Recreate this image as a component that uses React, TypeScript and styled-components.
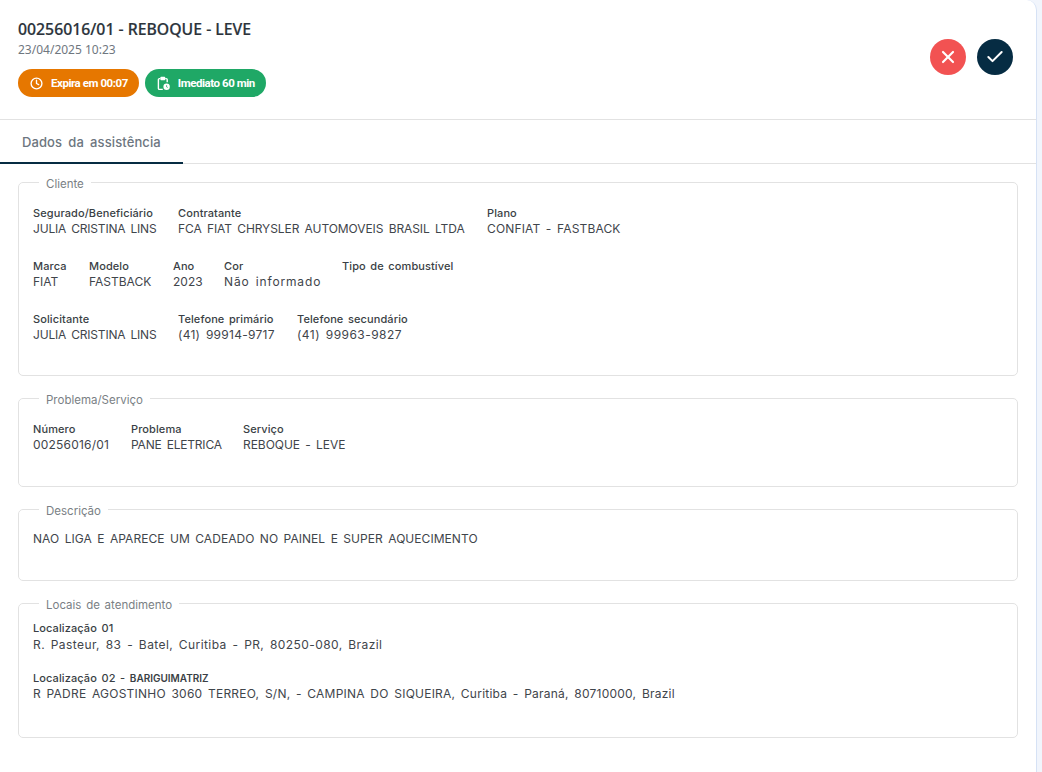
import React from 'react'
import styled, {createGlobalStyle} from 'styled-components'
import {Clock, X, Check} from 'lucide-react'

const GlobalStyle = createGlobalStyle`
    html, body {
        margin: 0;
        padding: 0;
        background-color: #f1f5fc;
    }
    body {
        font-family: "Inter", "Liberation Sans", sans-serif;
        overflow: hidden;
    }
`

const Page = styled.div`
    width: 1037px;
    height: 772px;
    background-color: #fff;
    border-top-right-radius: 10px;
    border-right: 1px solid #d6e2f5;
    box-sizing: border-box;
    display: flex;
    flex-direction: column;
`

const Header = styled.header`
    height: 120px;
    box-sizing: border-box;
    border-bottom: 1px solid #e2e2e2;
    padding: 19px 23px 0 18px;
    display: flex;
    justify-content: space-between;
`

const Title = styled.h1`
    margin: 0;
    font-family: "Noto Sans", sans-serif;
    font-size: 15.8px;
    line-height: 21px;
    font-weight: 500;
    -webkit-text-stroke: 0.2px #2b333b;
    color: #2b333b;
`

const DateText = styled.div`
    font-family: "Noto Sans", sans-serif;
    font-size: 12px;
    line-height: 16px;
    margin-top: 2px;
    color: #6f7780;
`

const Badges = styled.div`
    display: flex;
    gap: 6px;
    margin-top: 11px;
`

const Badge = styled.span<{$bg: string}>`
    height: 28px;
    padding: 0 11px 0 12px;
    border-radius: 14px;
    background-color: ${({$bg}) => $bg};
    color: #fff;
    font-family: "Roboto", sans-serif;
    font-size: 11.5px;
    font-weight: 700;
    letter-spacing: -0.45px;
    display: flex;
    align-items: center;
    gap: 8px;
`

const Actions = styled.div`
    display: flex;
    gap: 11px;
    margin-top: 20px;
`

const RoundButton = styled.button<{$bg: string}>`
    width: 36px;
    height: 36px;
    border-radius: 50%;
    border: none;
    padding: 0;
    background-color: ${({$bg}) => $bg};
    color: #fff;
    display: flex;
    align-items: center;
    justify-content: center;
`

const Tabs = styled.nav`
    height: 44px;
    box-sizing: border-box;
    border-bottom: 1px solid #e2e2e2;
    display: flex;
`

const Tab = styled.div`
    width: 183px;
    height: 44px;
    box-sizing: border-box;
    padding: 12px 0 0 22px;
    border-bottom: 2px solid #062c43;
    font-size: 13px;
    line-height: 20px;
    font-weight: 500;
    letter-spacing: 0.1px;
    word-spacing: 2.6px;
    color: #6d7680;
`

const Content = styled.main`
    padding: 9px 18px 0;
    display: flex;
    flex-direction: column;
    gap: 13px;
`

const Box = styled.fieldset<{$height: number; $top?: number}>`
    margin: 0;
    height: ${({$height}) => $height}px;
    box-sizing: border-box;
    border: 1px solid #e2e2e2;
    border-radius: 5px;
    padding: ${({$top}) => $top ?? 14}px 14px 0;
    min-width: 0;
`

const Legend = styled.legend`
    margin-left: 6px;
    padding: 3px 7px 0;
    font-size: 11.5px;
    line-height: 16px;
    word-spacing: 1.5px;
    color: #7a7f85;
`

const Row = styled.div`
    display: flex;
    gap: 21px;
    margin-bottom: 23px;
`

const Field = styled.div<{$width?: number}>`
    ${({$width}) => $width ? `width: ${$width}px;` : ''}
`

const Label = styled.div`
    font-size: 11px;
    line-height: 15px;
    font-weight: 500;
    letter-spacing: 0.1px;
    word-spacing: 1.5px;
    color: #3a3f45;
    white-space: nowrap;
`

const Value = styled.div<{$track?: number}>`
    font-size: 12px;
    line-height: 15px;
    word-spacing: 2px;
    letter-spacing: ${({$track}) => $track ?? 0}px;
    color: #3f454b;
    white-space: nowrap;
`

const Place = styled.div`
    margin-bottom: 19px;
    ${Value} {
        margin-top: 1px;
    }
`

const SmallTag = styled.span`
    font-size: 10px;
    font-weight: 600;
    letter-spacing: 0;
`

const ClipboardClock = () => (
    <svg width="13" height="15" viewBox="0 0 13 15" fill="none">
        <path d="M3.4 2.6H2.4a1 1 0 0 0-1 1v8.8a1 1 0 0 0 1 1h3.4M8.2 2.6h1a1 1 0 0 1 1 1v2.6" stroke="#fff" strokeWidth="1.4" />
        <rect x="3.4" y="0.8" width="4.8" height="3.4" rx="0.7" fill="#fff" />
        <circle cx="9.6" cy="10.8" r="3.2" fill="#fff" />
        <path d="M9.6 9.2v1.7l1.1.6" stroke="#1fa866" strokeWidth="0.8" />
    </svg>
)

const item = (label: string, value?: string, width?: number, track?: number) => (
    <Field $width={width} key={label}>
        <Label>{label}</Label>
        {value && <Value $track={track}>{value}</Value>}
    </Field>
)

export default function App() {
    return (
        <Page>
            <GlobalStyle />
            <Header>
                <div>
                    <Title>00256016/01 - REBOQUE - LEVE</Title>
                    <DateText>23/04/2025 10:23</DateText>
                    <Badges>
                        <Badge $bg="#e67700"><Clock size={13} strokeWidth={2.5} />Expira em 00:07</Badge>
                        <Badge $bg="#1fa866"><ClipboardClock />Imediato 60 min</Badge>
                    </Badges>
                </div>
                <Actions>
                    <RoundButton $bg="#f25252"><X size={20} strokeWidth={2.6} /></RoundButton>
                    <RoundButton $bg="#062c43"><Check size={20} strokeWidth={2.4} /></RoundButton>
                </Actions>
            </Header>
            <Tabs>
                <Tab>Dados da assistência</Tab>
            </Tabs>
            <Content>
                <Box $height={203}>
                    <Legend>Cliente</Legend>
                    <Row>
                        {item('Segurado/Beneficiário', 'JULIA CRISTINA LINS', 124, -0.2)}
                        {item('Contratante', 'FCA FIAT CHRYSLER AUTOMOVEIS BRASIL LTDA', 288, -0.08)}
                        {item('Plano', 'CONFIAT - FASTBACK', undefined, 0.15)}
                    </Row>
                    <Row>
                        {item('Marca', 'FIAT', 35)}
                        {item('Modelo', 'FASTBACK', 63)}
                        {item('Ano', '2023', 30)}
                        {item('Cor', 'Não informado', 97, 0.85)}
                        {item('Tipo de combustível')}
                    </Row>
                    <Row>
                        {item('Solicitante', 'JULIA CRISTINA LINS', 124, -0.2)}
                        {item('Telefone primário', '(41) 99914-9717', 98, 0.27)}
                        {item('Telefone secundário', '(41) 99963-9827', undefined, 0.45)}
                    </Row>
                </Box>
                <Box $height={98}>
                    <Legend>Problema/Serviço</Legend>
                    <Row>
                        {item('Número', '00256016/01', 77, 0.2)}
                        {item('Problema', 'PANE ELETRICA', 91, -0.2)}
                        {item('Serviço', 'REBOQUE - LEVE', undefined, -0.05)}
                    </Row>
                </Box>
                <Box $height={81} $top={12}>
                    <Legend>Descrição</Legend>
                    <Value $track={0.05}>NAO LIGA E APARECE UM CADEADO NO PAINEL E SUPER AQUECIMENTO</Value>
                </Box>
                <Box $height={144} $top={8}>
                    <Legend>Locais de atendimento</Legend>
                    <Place>
                        {item('Localização 01', 'R. Pasteur, 83 - Batel, Curitiba - PR, 80250-080, Brazil', undefined, 0.41)}
                    </Place>
                    <Field>
                        <Label>Localização 02 - <SmallTag>BARIGUIMATRIZ</SmallTag></Label>
                        <Value $track={0.23}>R PADRE AGOSTINHO 3060 TERREO, S/N, - CAMPINA DO SIQUEIRA, Curitiba - Paraná, 80710000, Brazil</Value>
                    </Field>
                </Box>
            </Content>
        </Page>
    )
}
